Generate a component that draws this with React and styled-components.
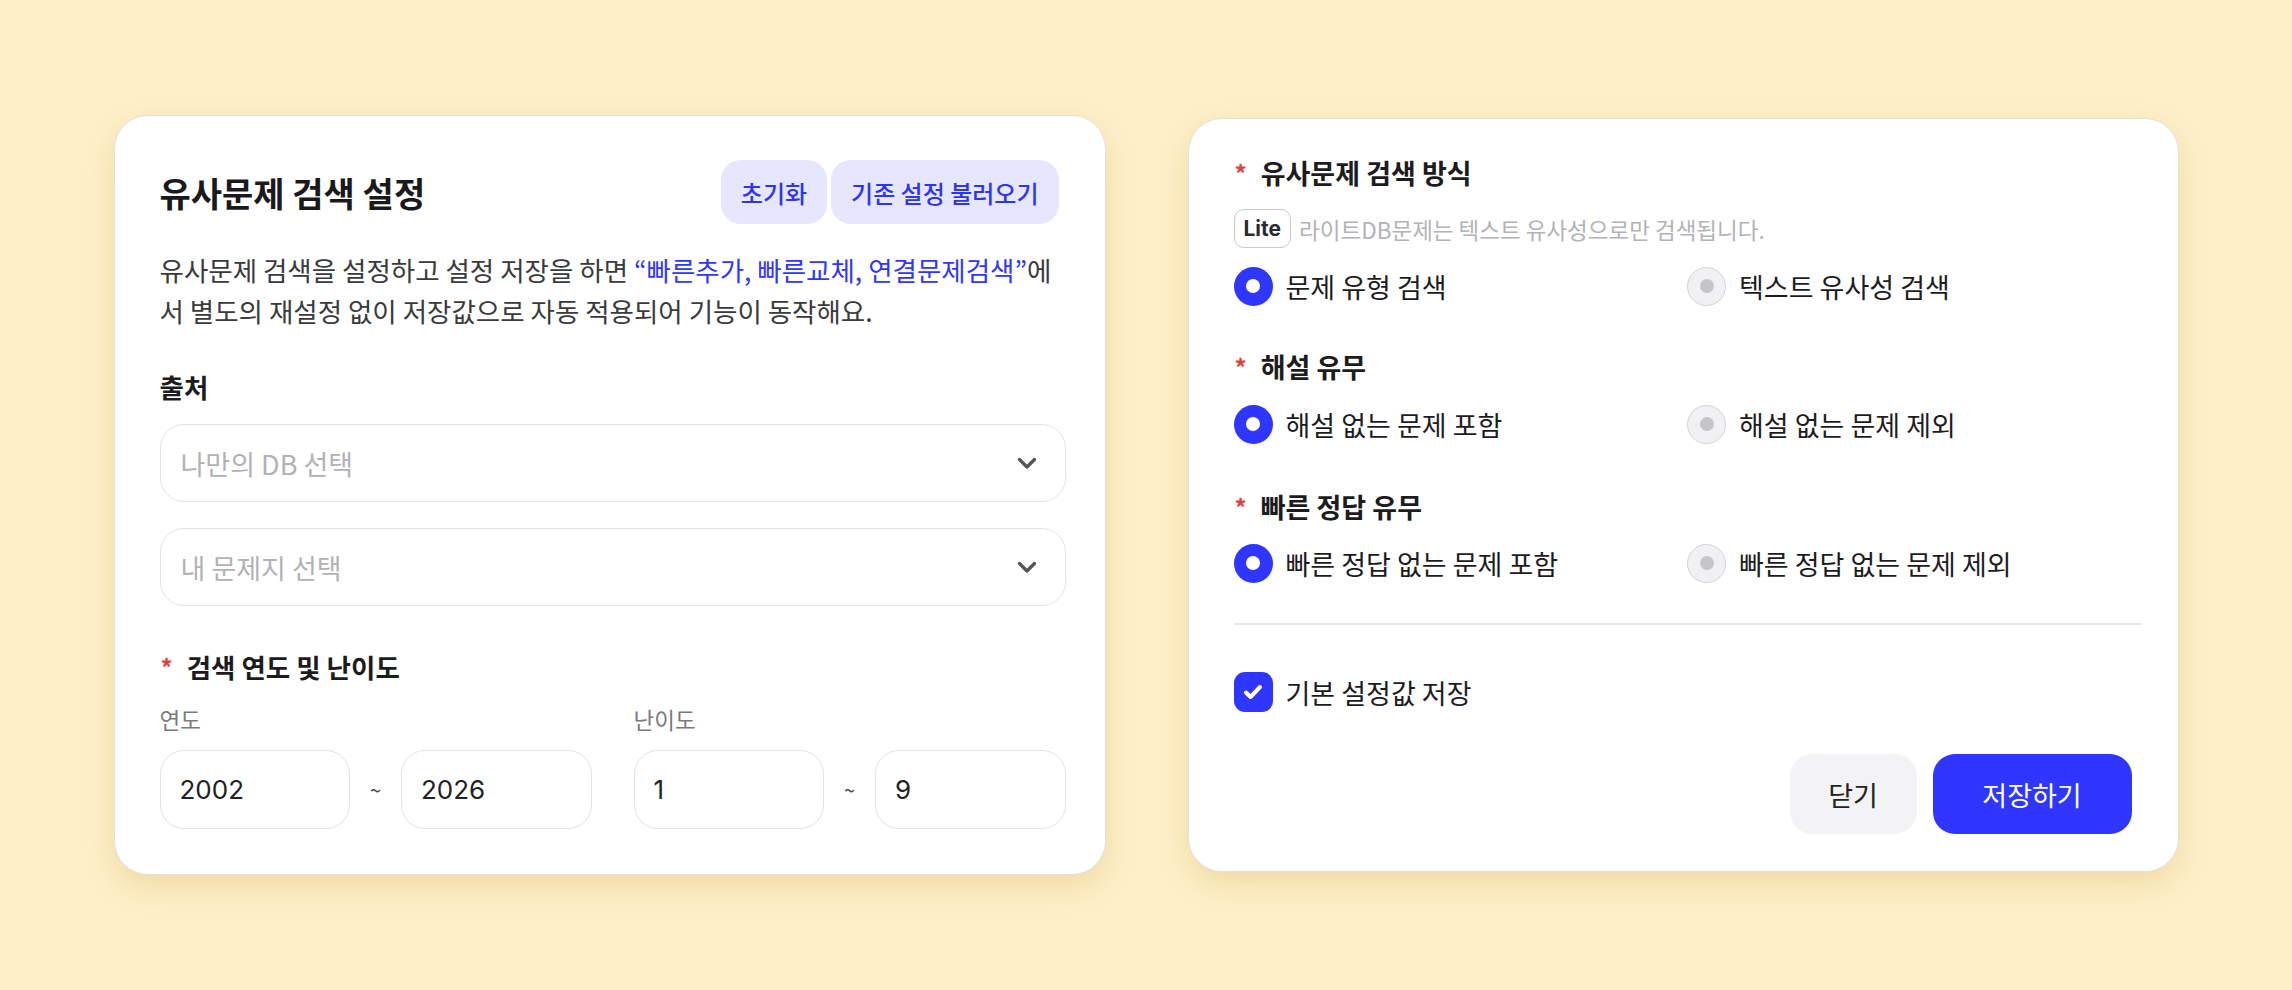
import React from "react";
import styled, { createGlobalStyle } from "styled-components";

const GlobalStyle = createGlobalStyle`
  html, body { margin: 0; padding: 0; }
  body {
    background: #fdf0c9;
    font-family: "Noto Sans CJK KR", "Noto Sans", sans-serif;
    color: #1c1c1e;
  }
  * { box-sizing: border-box; }
`;

const Page = styled.div`
  min-height: 990px;
  display: flex;
  align-items: center;
  justify-content: center;
  gap: 82px;
  background: #fdf0c9;
`;

const Card = styled.div`
  width: ${(p) => p.$w}px;
  background: #fff;
  border: 1px solid #e1e1e1;
  border-radius: 34px;
  box-shadow: 0 12px 32px rgba(210, 172, 80, 0.32);
  padding: ${(p) => p.$pad};
  display: flex;
  flex-direction: column;
`;

const Header = styled.div`
  display: flex;
  align-items: center;
  justify-content: space-between;
  height: 64px;
  padding-right: 7px;
`;

const Title = styled.h1`
  margin: 0;
  font-size: 34px;
  font-weight: 700;
  color: #1a1a1c;
`;

const HeaderButtons = styled.div`
  display: flex;
  gap: 4px;
`;

const SoftButton = styled.button`
  height: 64px;
  padding: 0 20px;
  border: none;
  border-radius: 20px;
  background: #e6e6fe;
  color: #2d35f0;
  font-family: inherit;
  font-size: 24px;
  font-weight: 500;
`;

const Desc = styled.p`
  margin: 25px 0 0;
  font-size: 26.5px;
  line-height: 41px;
  color: #3a3a3c;
`;

const Highlight = styled.span`
  color: #3036ff;
`;

const SectionLabel = styled.div`
  margin-top: ${(p) => p.$mt}px;
  font-size: 26.5px;
  line-height: 34px;
  font-weight: 700;
  color: #1c1c1e;
  display: flex;
  align-items: center;
`;

const Star = styled.span`
  color: #e0413b;
  font-size: 24px;
  margin-right: 14px;
  margin-left: 1px;
`;

const Select = styled.div`
  margin-top: ${(p) => p.$mt}px;
  height: 78px;
  border: 1.5px solid #e3e3e5;
  border-radius: 24px;
  padding: 0 28px 0 20px;
  display: flex;
  align-items: center;
  justify-content: space-between;
  font-size: 27px;
  color: #b2b2b6;
`;

const RangeGrid = styled.div`
  display: grid;
  grid-template-columns: 1fr 1fr;
  column-gap: 42px;
  margin-top: 21px;
`;

const RangeGroup = styled.div`
  display: flex;
  flex-direction: column;
`;

const SmallLabel = styled.div`
  font-size: 22.5px;
  line-height: 28px;
  color: #7a7a7e;
  margin-bottom: 17px;
`;

const RangeRow = styled.div`
  display: flex;
  align-items: center;
`;

const NumBox = styled.div`
  flex: 1;
  height: 79px;
  border: 1.5px solid #e3e3e5;
  border-radius: 24px;
  padding: 0 19px;
  display: flex;
  align-items: center;
  font-family: "Inter", "Noto Sans", sans-serif;
  font-size: 26px;
  color: #222;
`;

const Tilde = styled.span`
  width: 51px;
  text-align: center;
  font-size: 20px;
  color: #444;
`;

const Heading = styled.div`
  margin-top: ${(p) => p.$mt}px;
  display: flex;
  align-items: center;
  font-size: 27px;
  line-height: 34px;
  font-weight: 700;
  color: #1c1c1e;
`;

const LiteRow = styled.div`
  margin-top: 19px;
  display: flex;
  align-items: center;
  gap: 8px;
  height: 39px;
`;

const LiteBadge = styled.span`
  height: 39px;
  padding: 0 9px;
  border: 1.5px solid #c9c9cc;
  border-radius: 10px;
  display: flex;
  align-items: center;
  font-family: "Inter", "Noto Sans", sans-serif;
  font-size: 21px;
  font-weight: 700;
  color: #2a2a2c;
`;

const LiteText = styled.span`
  font-size: 22.5px;
  color: #b3b3b7;
`;

const RadioGrid = styled.div`
  margin-top: ${(p) => p.$mt}px;
  display: grid;
  grid-template-columns: 1fr 1fr;
`;

const RadioItem = styled.label`
  display: flex;
  align-items: center;
  gap: 13px;
  font-size: 27px;
  color: #1c1c1e;
  height: 40px;
`;

const RadioCircle = styled.span`
  width: 39px;
  height: 39px;
  border-radius: 50%;
  flex: none;
  display: flex;
  align-items: center;
  justify-content: center;
  background: ${(p) => (p.$on ? "#2e36ff" : "#f1f1f3")};
  border: ${(p) => (p.$on ? "none" : "1.5px solid #d4d4d8")};
  &::after {
    content: "";
    width: 14px;
    height: 14px;
    border-radius: 50%;
    background: ${(p) => (p.$on ? "#fff" : "#c6c6ca")};
  }
`;

const Divider = styled.hr`
  margin: 40px 0 0;
  border: none;
  height: 2px;
  background: #e6e6e8;
`;

const CheckRow = styled.label`
  margin-top: 47px;
  display: flex;
  align-items: center;
  gap: 13px;
  font-size: 27px;
  height: 40px;
  color: #1c1c1e;
`;

const CheckBox = styled.span`
  width: 39px;
  height: 40px;
  border-radius: 11px;
  background: #2e36ff;
  display: flex;
  align-items: center;
  justify-content: center;
  flex: none;
`;

const Footer = styled.div`
  margin-top: 42px;
  display: flex;
  justify-content: flex-end;
  gap: 16px;
  padding-right: 9px;
`;

const FooterButton = styled.button`
  height: 80px;
  width: ${(p) => p.$w}px;
  border: none;
  border-radius: 22px;
  font-family: inherit;
  font-size: 27px;
  background: ${(p) => (p.$primary ? "#2e36ff" : "#f3f3f5")};
  color: ${(p) => (p.$primary ? "#fff" : "#222")};
`;

const Chevron = () => (
  <svg width="20" height="12" viewBox="0 0 20 12" fill="none">
    <path d="M2.5 2.5l7.5 7.5 7.5-7.5" stroke="#555559" strokeWidth="3.2" strokeLinecap="round" strokeLinejoin="round" />
  </svg>
);

const Check = () => (
  <svg width="22" height="18" viewBox="0 0 22 18" fill="none">
    <path d="M4 9.5l4.5 4.5L18 4" stroke="#fff" strokeWidth="4" strokeLinecap="round" strokeLinejoin="round" />
  </svg>
);

const RadioPair = ({ mt, left, right }) => (
  <RadioGrid $mt={mt}>
    <RadioItem>
      <RadioCircle $on />
      {left}
    </RadioItem>
    <RadioItem>
      <RadioCircle />
      {right}
    </RadioItem>
  </RadioGrid>
);

export default function App() {
  return (
    <>
      <GlobalStyle />
      <Page>
        <Card $w={992} $pad="44px 39px 45px 45px">
          <Header>
            <Title>유사문제 검색 설정</Title>
            <HeaderButtons>
              <SoftButton>초기화</SoftButton>
              <SoftButton>기존 설정 불러오기</SoftButton>
            </HeaderButtons>
          </Header>
          <Desc>
            유사문제 검색을 설정하고 설정 저장을 하면{" "}
            <Highlight>“빠른추가, 빠른교체, 연결문제검색”</Highlight>에서 별도의 재설정 없이 저장값으로 자동 적용되어 기능이
            동작해요.
          </Desc>
          <SectionLabel $mt={39}>출처</SectionLabel>
          <Select $mt={20}>
            나만의 DB 선택
            <Chevron />
          </Select>
          <Select $mt={26}>
            내 문제지 선택
            <Chevron />
          </Select>
          <SectionLabel $mt={44}>
            <Star>*</Star>검색 연도 및 난이도
          </SectionLabel>
          <RangeGrid>
            <RangeGroup>
              <SmallLabel>연도</SmallLabel>
              <RangeRow>
                <NumBox>2002</NumBox>
                <Tilde>~</Tilde>
                <NumBox>2026</NumBox>
              </RangeRow>
            </RangeGroup>
            <RangeGroup>
              <SmallLabel>난이도</SmallLabel>
              <RangeRow>
                <NumBox>1</NumBox>
                <Tilde>~</Tilde>
                <NumBox>9</NumBox>
              </RangeRow>
            </RangeGroup>
          </RangeGrid>
        </Card>

        <Card $w={991} $pad="37px 37px 37px 45px">
          <Heading $mt={0}>
            <Star>*</Star>유사문제 검색 방식
          </Heading>
          <LiteRow>
            <LiteBadge>Lite</LiteBadge>
            <LiteText>라이트DB문제는 텍스트 유사성으로만 검색됩니다.</LiteText>
          </LiteRow>
          <RadioPair mt={18} left="문제 유형 검색" right="텍스트 유사성 검색" />
          <Heading $mt={44}>
            <Star>*</Star>해설 유무
          </Heading>
          <RadioPair mt={20} left="해설 없는 문제 포함" right="해설 없는 문제 제외" />
          <Heading $mt={46}>
            <Star>*</Star>빠른 정답 유무
          </Heading>
          <RadioPair mt={19} left="빠른 정답 없는 문제 포함" right="빠른 정답 없는 문제 제외" />
          <Divider />
          <CheckRow>
            <CheckBox>
              <Check />
            </CheckBox>
            기본 설정값 저장
          </CheckRow>
          <Footer>
            <FooterButton $w={127}>닫기</FooterButton>
            <FooterButton $w={199} $primary>
              저장하기
            </FooterButton>
          </Footer>
        </Card>
      </Page>
    </>
  );
}
